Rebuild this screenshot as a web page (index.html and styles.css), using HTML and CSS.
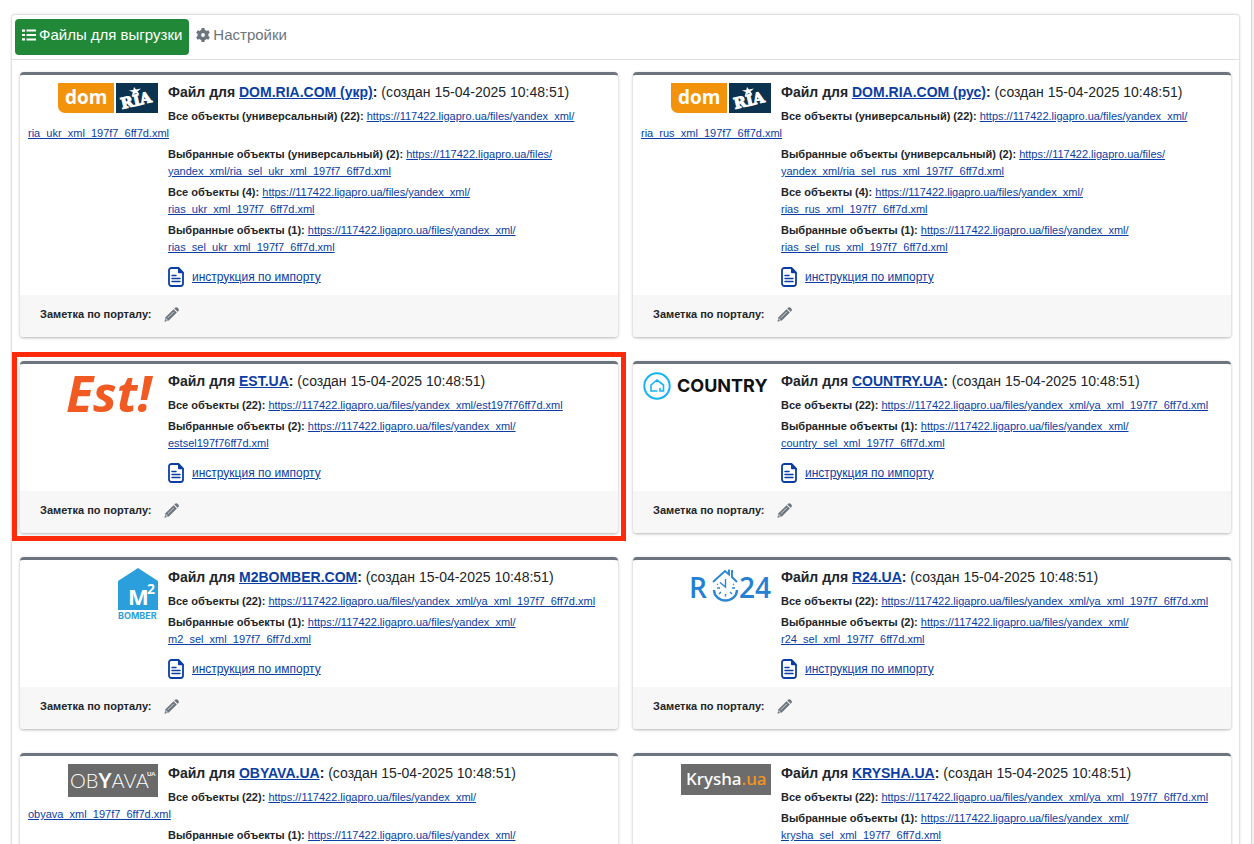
FILE: index.html
```html
<!DOCTYPE html>
<html lang="ru">
<head>
  <meta charset="UTF-8">
  <title>Файлы для выгрузки</title>
  <link rel="stylesheet" href="styles.css">
</head>
<body>
  <!-- shared icons -->
  <svg class="sprite" aria-hidden="true">
    <symbol id="icon-doc" viewBox="0 0 16 20">
      <path d="M10.500 1H3.500a2.500 2.500 0 0 0-2.500 2.500v13A2.500 2.500 0 0 0 3.500 19h9a2.500 2.500 0 0 0 2.500-2.500V5.500z" fill="none" stroke="currentColor" stroke-width="1.800"/>
      <path d="M10 .5l5.800 5.800H11a1 1 0 0 1-1-1z" fill="currentColor"/>
      <path d="M4 8.500h4M4 11.500h8M4 14.500h8" stroke="currentColor" stroke-width="1.500" stroke-linecap="round"/>
    </symbol>
    <symbol id="icon-pencil" viewBox="0 0 16 16">
      <path d="M11 1.600l.7-.7a2 2 0 0 1 2.800 0l.7.7a2 2 0 0 1 0 2.800l-.7.7z" fill="currentColor"/>
      <path d="M10.200 2.400l3.500 3.500-8.600 8.600L.5 15.600l1.100-4.600z" fill="currentColor"/>
      <path d="M4 11.600l6.500-6.500M2.200 12.100v1.900h1.900" fill="none" stroke="#f7f7f7" stroke-width=".8"/>
    </symbol>
  </svg>

  <main class="page">
    <div class="panel">
      <nav class="tabs">
        <a class="tab active" href="#files">
          <svg width="14" height="12" viewBox="0 0 14 12" aria-hidden="true">
            <path d="M0 .5h3v2.200H0zM0 4.900h3v2.200H0zM0 9.300h3v2.200H0z" fill="currentColor"/>
            <path d="M4.500 1.600H14M4.500 6H14M4.500 10.400H14" stroke="currentColor" stroke-width="2"/>
          </svg>
          Файлы для выгрузки
        </a>
        <a class="tab" href="#settings">
          <svg width="14" height="14" viewBox="0 0 16 16" aria-hidden="true">
            <circle cx="8" cy="8" r="4.200" fill="none" stroke="currentColor" stroke-width="4"/>
            <path d="M6.300 0h3.400l.5 4H5.800zM6.300 16h3.400l.5-4H5.800zM.2 5.500l1.700-3L5.600 4 3.500 8zM15.800 10.500l-1.700 3L10.400 12l2.100-4zM15.800 5.500l-1.700-3L10.400 4l2.100 4zM.2 10.500l1.700 3L5.600 12 3.500 8z" fill="currentColor"/>
          </svg>
          Настройки
        </a>
      </nav>

      <div class="portals">
        <section class="card">
          <div class="card-body">
            <div class="logo">
              <svg width="100" height="30" viewBox="0 0 100 30" role="img" aria-label="dom ria">
                <path d="M0 0h56v30H7a7 7 0 0 1-7-7z" fill="#f3930c"/>
                <path d="M58 0h42v30H58z" fill="#0b3350"/>
                <text class="logo-dom" x="7" y="21">dom</text>
                <text class="logo-ria" x="64" y="26" transform="rotate(-13 64 26)">RIA</text>
                <path d="M76 4l2 2.500 5-1-3.500 3 2 3-4-1.200-3.500 2.200.8-3.500-4-1.500 4.500-.6z" fill="#fff"/>
              </svg>
            </div>
            <div class="info">
              <h2>Файл для <a href="#">DOM.RIA.COM (укр)</a>: <span>(создан 15-04-2025 10:48:51)</span></h2>
              <p class="wide"><b>Все объекты (универсальный) (22):</b> <a href="#">https://117422.ligapro.ua/files/yandex_xml/<wbr>ria_ukr_xml_197f7_6ff7d.xml</a></p>
              <p><b>Выбранные объекты (универсальный) (2):</b> <a href="#">https://117422.ligapro.ua/files/<wbr>yandex_xml/ria_sel_ukr_xml_197f7_6ff7d.xml</a></p>
              <p><b>Все объекты (4):</b> <a href="#">https://117422.ligapro.ua/files/yandex_xml/<wbr>rias_ukr_xml_197f7_6ff7d.xml</a></p>
              <p><b>Выбранные объекты (1):</b> <a href="#">https://117422.ligapro.ua/files/yandex_xml/<wbr>rias_sel_ukr_xml_197f7_6ff7d.xml</a></p>
              <div class="manual"><svg width="16" height="20" aria-hidden="true"><use href="#icon-doc"/></svg><a href="#">инструкция по импорту</a></div>
            </div>
          </div>
          <div class="card-footer">Заметка по порталу: <button class="edit" aria-label="Редактировать"><svg width="15" height="15"><use href="#icon-pencil"/></svg></button></div>
        </section>

        <section class="card">
          <div class="card-body">
            <div class="logo">
              <svg width="100" height="30" viewBox="0 0 100 30" role="img" aria-label="dom ria">
                <path d="M0 0h56v30H7a7 7 0 0 1-7-7z" fill="#f3930c"/>
                <path d="M58 0h42v30H58z" fill="#0b3350"/>
                <text class="logo-dom" x="7" y="21">dom</text>
                <text class="logo-ria" x="64" y="26" transform="rotate(-13 64 26)">RIA</text>
                <path d="M76 4l2 2.500 5-1-3.500 3 2 3-4-1.200-3.500 2.200.8-3.500-4-1.500 4.500-.6z" fill="#fff"/>
              </svg>
            </div>
            <div class="info">
              <h2>Файл для <a href="#">DOM.RIA.COM (рус)</a>: <span>(создан 15-04-2025 10:48:51)</span></h2>
              <p class="wide"><b>Все объекты (универсальный) (22):</b> <a href="#">https://117422.ligapro.ua/files/yandex_xml/<wbr>ria_rus_xml_197f7_6ff7d.xml</a></p>
              <p><b>Выбранные объекты (универсальный) (2):</b> <a href="#">https://117422.ligapro.ua/files/<wbr>yandex_xml/ria_sel_rus_xml_197f7_6ff7d.xml</a></p>
              <p><b>Все объекты (4):</b> <a href="#">https://117422.ligapro.ua/files/yandex_xml/<wbr>rias_rus_xml_197f7_6ff7d.xml</a></p>
              <p><b>Выбранные объекты (1):</b> <a href="#">https://117422.ligapro.ua/files/yandex_xml/<wbr>rias_sel_rus_xml_197f7_6ff7d.xml</a></p>
              <div class="manual"><svg width="16" height="20" aria-hidden="true"><use href="#icon-doc"/></svg><a href="#">инструкция по импорту</a></div>
            </div>
          </div>
          <div class="card-footer">Заметка по порталу: <button class="edit" aria-label="Редактировать"><svg width="15" height="15"><use href="#icon-pencil"/></svg></button></div>
        </section>

        <section class="card marked">
          <div class="card-body">
            <div class="logo">
              <svg width="92" height="60" viewBox="0 0 92 60" role="img" aria-label="Est!">
                <text class="logo-est" x="0" y="40">Est!</text>
              </svg>
            </div>
            <div class="info">
              <h2>Файл для <a href="#">EST.UA</a>: <span>(создан 15-04-2025 10:48:51)</span></h2>
              <p><b>Все объекты (22):</b> <a href="#">https://117422.ligapro.ua/files/yandex_xml/<wbr>est197f76ff7d.xml</a></p>
              <p><b>Выбранные объекты (2):</b> <a href="#">https://117422.ligapro.ua/files/yandex_xml/<wbr>estsel197f76ff7d.xml</a></p>
              <div class="manual"><svg width="16" height="20" aria-hidden="true"><use href="#icon-doc"/></svg><a href="#">инструкция по импорту</a></div>
            </div>
          </div>
          <div class="card-footer">Заметка по порталу: <button class="edit" aria-label="Редактировать"><svg width="15" height="15"><use href="#icon-pencil"/></svg></button></div>
        </section>

        <section class="card">
          <div class="card-body">
            <div class="logo">
              <svg width="128" height="28" viewBox="0 0 128 28" role="img" aria-label="Country">
                <circle cx="14" cy="14" r="12.700" fill="none" stroke="#14b4f4" stroke-width="2"/>
                <path d="M17 16v3h3.500v-6L14 8l-6 5v6h6.500" fill="none" stroke="#14b4f4" stroke-width="1.600"/>
                <text class="logo-country" x="34" y="20">COUNTRY</text>
              </svg>
            </div>
            <div class="info">
              <h2>Файл для <a href="#">COUNTRY.UA</a>: <span>(создан 15-04-2025 10:48:51)</span></h2>
              <p><b>Все объекты (22):</b> <a href="#">https://117422.ligapro.ua/files/yandex_xml/<wbr>ya_xml_197f7_6ff7d.xml</a></p>
              <p><b>Выбранные объекты (1):</b> <a href="#">https://117422.ligapro.ua/files/yandex_xml/<wbr>country_sel_xml_197f7_6ff7d.xml</a></p>
              <div class="manual"><svg width="16" height="20" aria-hidden="true"><use href="#icon-doc"/></svg><a href="#">инструкция по импорту</a></div>
            </div>
          </div>
          <div class="card-footer">Заметка по порталу: <button class="edit" aria-label="Редактировать"><svg width="15" height="15"><use href="#icon-pencil"/></svg></button></div>
        </section>

        <section class="card">
          <div class="card-body">
            <div class="logo">
              <svg width="40" height="54" viewBox="0 0 40 54" role="img" aria-label="M2 Bomber">
                <path d="M0 13L20 0l20 13v29H0z" fill="#2b9fdb"/>
                <text class="logo-m" x="10" y="37">M</text>
                <text class="logo-two" x="29" y="26">2</text>
                <text class="logo-bomber" x="0" y="51">BOMBER</text>
              </svg>
            </div>
            <div class="info">
              <h2>Файл для <a href="#">M2BOMBER.COM</a>: <span>(создан 15-04-2025 10:48:51)</span></h2>
              <p><b>Все объекты (22):</b> <a href="#">https://117422.ligapro.ua/files/yandex_xml/<wbr>ya_xml_197f7_6ff7d.xml</a></p>
              <p><b>Выбранные объекты (1):</b> <a href="#">https://117422.ligapro.ua/files/yandex_xml/<wbr>m2_sel_xml_197f7_6ff7d.xml</a></p>
              <div class="manual"><svg width="16" height="20" aria-hidden="true"><use href="#icon-doc"/></svg><a href="#">инструкция по импорту</a></div>
            </div>
          </div>
          <div class="card-footer">Заметка по порталу: <button class="edit" aria-label="Редактировать"><svg width="15" height="15"><use href="#icon-pencil"/></svg></button></div>
        </section>

        <section class="card">
          <div class="card-body">
            <div class="logo">
              <svg width="82" height="44" viewBox="0 0 82 44" role="img" aria-label="R24">
                <text class="logo-r24" x="0" y="30">R</text>
                <text class="logo-r24" x="50" y="30">24</text>
                <g fill="none" stroke="#2b86d3">
                  <path d="M24 14L36 3l4 3.500V1.500M43 2v7l5 5" stroke-width="1.900"/>
                  <path d="M25 22a11.500 10.500 0 0 0 23 0" stroke-width="2.400"/>
                  <path d="M31 14.500l5.500 4.500V11M36.500 28.500v-2.500M28 20h3M43 20h3M30 26l2-2M43 26l-2-2M28 16l1 .6M45 16l-1 .6" stroke-width="1.400"/>
                </g>
              </svg>
            </div>
            <div class="info">
              <h2>Файл для <a href="#">R24.UA</a>: <span>(создан 15-04-2025 10:48:51)</span></h2>
              <p><b>Все объекты (22):</b> <a href="#">https://117422.ligapro.ua/files/yandex_xml/<wbr>ya_xml_197f7_6ff7d.xml</a></p>
              <p><b>Выбранные объекты (2):</b> <a href="#">https://117422.ligapro.ua/files/yandex_xml/<wbr>r24_sel_xml_197f7_6ff7d.xml</a></p>
              <div class="manual"><svg width="16" height="20" aria-hidden="true"><use href="#icon-doc"/></svg><a href="#">инструкция по импорту</a></div>
            </div>
          </div>
          <div class="card-footer">Заметка по порталу: <button class="edit" aria-label="Редактировать"><svg width="15" height="15"><use href="#icon-pencil"/></svg></button></div>
        </section>

        <section class="card">
          <div class="card-body">
            <div class="logo">
              <svg width="90" height="33" viewBox="0 0 90 33" role="img" aria-label="Obyava">
                <path d="M0 0h90v33H0z" fill="#6a6a6a"/>
                <text class="logo-obyava" x="2" y="24">OB<tspan class="heavy">Y</tspan>AVA</text>
                <text class="logo-obyava-ua" x="79" y="12">UA</text>
              </svg>
            </div>
            <div class="info">
              <h2>Файл для <a href="#">OBYAVA.UA</a>: <span>(создан 15-04-2025 10:48:51)</span></h2>
              <p class="wide"><b>Все объекты (22):</b> <a href="#">https://117422.ligapro.ua/files/yandex_xml/<br>obyava_xml_197f7_6ff7d.xml</a></p>
              <p><b>Выбранные объекты (1):</b> <a href="#">https://117422.ligapro.ua/files/yandex_xml/</a></p>
            </div>
          </div>
        </section>

        <section class="card">
          <div class="card-body">
            <div class="logo">
              <svg width="90" height="31" viewBox="0 0 90 31" role="img" aria-label="Krysha.ua">
                <path d="M0 0h90v31H0z" fill="#6c6c6c"/>
                <text class="logo-krysha" x="5" y="21">Krysha<tspan fill="#f7931e">.ua</tspan></text>
              </svg>
            </div>
            <div class="info">
              <h2>Файл для <a href="#">KRYSHA.UA</a>: <span>(создан 15-04-2025 10:48:51)</span></h2>
              <p><b>Все объекты (22):</b> <a href="#">https://117422.ligapro.ua/files/yandex_xml/<wbr>ya_xml_197f7_6ff7d.xml</a></p>
              <p><b>Выбранные объекты (1):</b> <a href="#">https://117422.ligapro.ua/files/yandex_xml/<wbr>krysha_sel_xml_197f7_6ff7d.xml</a></p>
            </div>
          </div>
        </section>
      </div>
    </div>
  </main>
</body>
</html>
```
FILE: styles.css
```css
* {
  box-sizing: border-box;
}
body {
  margin: 0;
  background: #f1f1f3;
  color: #212529;
  font-family: "Liberation Sans", Arial, sans-serif;
  font-size: 11px;
  line-height: 17px;
}
a {
  color: #0a3ea4;
}
.sprite {
  position: absolute;
  width: 0;
  height: 0;
}
.page {
  height: 100vh;
  margin-right: 2px;
  padding: 14px 11px 0;
  overflow: hidden;
  background: #fff;
  border-right: 1px solid #d5d5d8;
}
.panel {
  min-height: 100vh;
  border: 1px solid #dfe1e4;
  border-radius: 4px;
  box-shadow: 0 0 2px rgba(0, 0, 0, 0.15);
}

/* tabs */
.tabs {
  display: flex;
  padding: 4px 3px;
  border-bottom: 1px solid #dcdee1;
}
.tab {
  display: flex;
  align-items: center;
  gap: 3px;
  height: 36px;
  padding: 0 7px 5px;
  border-radius: 4px;
  color: #6c757d;
  font-size: 15px;
  text-decoration: none;
}
.tab.active {
  background: #218838;
  color: #fff;
}

/* cards */
.portals {
  display: grid;
  grid-template-columns: 1fr 1fr;
  gap: 24px 15px;
  padding: 12px 8px;
}
.card {
  position: relative;
  display: flex;
  flex-direction: column;
  border-top: 3px solid #6c757d;
  border-radius: 4px;
  background: #fff;
  box-shadow: 0 1px 3px rgba(0, 0, 0, 0.3);
}
.card-body {
  display: flex;
  gap: 10px;
  padding: 8px;
}
.logo {
  display: flex;
  flex: 0 0 130px;
  justify-content: flex-end;
  align-items: flex-start;
}
.logo svg {
  overflow: visible;
}
.info {
  flex: 1;
  min-width: 0;
}
.info h2 {
  margin: 0 0 6px;
  font-size: 14px;
  line-height: 19px;
}
.info h2 span {
  font-weight: normal;
}
.info p {
  margin: 0 0 4px;
}
/* the second line runs under the logo */
.info .wide {
  margin-left: -140px;
  text-indent: 140px;
}
.manual {
  display: flex;
  align-items: center;
  gap: 8px;
  padding-top: 7px;
  color: #0a3ea4;
  font-size: 12px;
}
.card-footer {
  display: flex;
  align-items: center;
  gap: 12px;
  height: 42px;
  padding: 0 20px 3px;
  border-radius: 0 0 4px 4px;
  background: #f7f7f7;
  font-weight: bold;
}
.edit {
  display: flex;
  padding: 0;
  border: none;
  background: none;
  color: #6c757d;
  cursor: pointer;
}
.marked::after {
  content: "";
  position: absolute;
  inset: -12px -8px -8px -8px;
  border: 5px solid #ff2a0a;
  pointer-events: none;
}

/* logos */
.logo-dom {
  fill: #fff;
  font: bold 19px "Open Sans", sans-serif;
}
.logo-ria {
  fill: #fff;
  stroke: #fff;
  font: bold 15px "DejaVu Serif", serif;
}
.logo-est {
  fill: #f15a22;
  font: italic bold 50px "Open Sans", sans-serif;
}
.logo-country {
  fill: #111;
  font: bold 18px Inter, sans-serif;
}
.logo-m {
  fill: #fff;
  font: bold 22px "Open Sans", sans-serif;
}
.logo-two {
  fill: #fff;
  font: bold 14px "Open Sans", sans-serif;
}
.logo-bomber {
  fill: #2b9fdb;
  font: bold 9px Inter, sans-serif;
}
.logo-r24 {
  fill: #2380d3;
  font: 600 28px "Open Sans", sans-serif;
}
.logo-obyava {
  fill: #fff;
  font: 300 20px Lato, sans-serif;
}
.logo-obyava .heavy {
  font-weight: bold;
}
.logo-obyava-ua {
  fill: #fff;
  font: bold 6px Lato, sans-serif;
}
.logo-krysha {
  fill: #fff;
  font: 500 17px "Noto Sans", sans-serif;
}
```
